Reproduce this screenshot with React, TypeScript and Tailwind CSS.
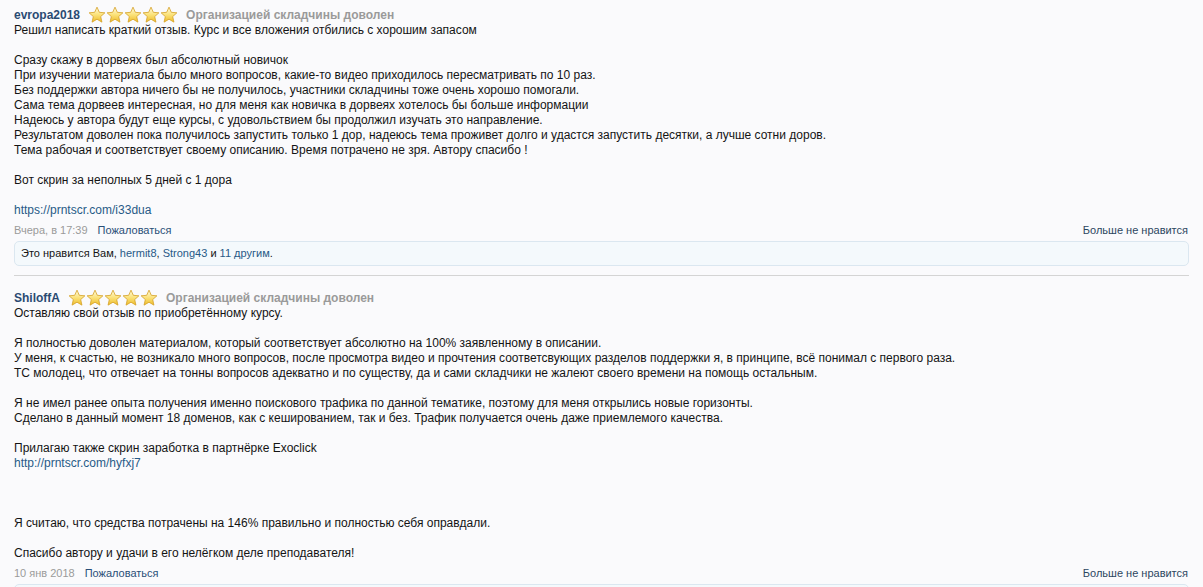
import React from "react";

const Star = ({ id }: { id: string }) => (
  <svg width="18" height="18" viewBox="0 0 24 24" className="block">
    <defs>
      <linearGradient id={id} x1="0" y1="0" x2="0" y2="1">
        <stop offset="0" stopColor="#fffbe0" />
        <stop offset="0.5" stopColor="#fbe27a" />
        <stop offset="1" stopColor="#eebc2a" />
      </linearGradient>
    </defs>
    <path
      d="M12 1.5l3.1 6.9 7.4.7-5.6 5 1.7 7.4L12 17.6l-6.6 3.9 1.7-7.4-5.6-5 7.4-.7z"
      fill={`url(#${id})`}
      stroke="#d6a32a"
      strokeWidth="1.1"
      strokeLinejoin="round"
    />
  </svg>
);

const Stars = ({ k }: { k: string }) => (
  <div className="flex">
    {[0, 1, 2, 3, 4].map((i) => (
      <Star key={i} id={`g${k}${i}`} />
    ))}
  </div>
);

type Line = string | { link: string } | null;

const Review = ({
  user,
  k,
  lines,
  date,
  likes,
}: {
  user: string;
  k: string;
  lines: Line[];
  date: string;
  likes: boolean;
}) => (
  <div className="px-[14px]">
    <div className="flex items-center h-[17px] text-[12px] font-bold">
      <span className="text-[#2a4a72]">{user}</span>
      <span className="ml-[8px]">
        <Stars k={k} />
      </span>
      <span className="ml-[8px] text-[#9a9a9a]">Организацией складчины доволен</span>
    </div>
    <div className="text-[12px] leading-[15px] text-[#141414]">
      {lines.map((l, i) =>
        l === null ? (
          <div key={i} className="h-[15px]" />
        ) : typeof l === "string" ? (
          <div key={i}>{l}</div>
        ) : (
          <div key={i} className="text-[#285a87]">
            {l.link}
          </div>
        )
      )}
    </div>
    <div className="mt-[5px] flex justify-between text-[11px] leading-[15px]">
      <div>
        <span className="text-[#9a9a9a]">{date}</span>
        <span className="ml-[10px] text-[#2a4f78]">Пожаловаться</span>
      </div>
      <span className="text-[#2c4660] mr-[1px]">Больше не нравится</span>
    </div>
    <div className="mt-[3px] h-[25px] rounded-[5px] border border-[#dbe7f0] bg-[#f4f9fc] flex items-center px-[6px] text-[11px] text-[#141414]">
      {likes && (
        <span>
          Это нравится Вам, <span className="text-[#285a87]">hermit8</span>,{" "}
          <span className="text-[#285a87]">Strong43</span> и{" "}
          <span className="text-[#285a87]">11 другим</span>.
        </span>
      )}
    </div>
  </div>
);

export default function App() {
  return (
    <div
      className="w-[1203px] h-[587px] overflow-hidden bg-[#fafafc] pt-[6px]"
      style={{ fontFamily: '"Liberation Sans", Arial, sans-serif' }}
    >
      <Review
        user="evropa2018"
        k="a"
        date="Вчера, в 17:39"
        likes
        lines={[
          "Решил написать краткий отзыв. Курс и все вложения отбились с хорошим запасом",
          null,
          "Сразу скажу в дорвеях был абсолютный новичок",
          "При изучении материала было много вопросов, какие-то видео приходилось пересматривать по 10 раз.",
          "Без поддержки автора ничего бы не получилось, участники складчины тоже очень хорошо помогали.",
          "Сама тема дорвеев интересная, но для меня как новичка в дорвеях хотелось бы больше информации",
          "Надеюсь у автора будут еще курсы, с удовольствием бы продолжил изучать это направление.",
          "Результатом доволен пока получилось запустить только 1 дор, надеюсь тема проживет долго и удастся запустить десятки, а лучше сотни доров.",
          "Тема рабочая и соответствует своему описанию. Время потрачено не зря. Автору спасибо !",
          null,
          "Вот скрин за неполных 5 дней с 1 дора",
          null,
          { link: "https://prntscr.com/i33dua" },
        ]}
      />
      <div className="mx-[14px] mt-[9px] h-px bg-[#d4d4d4]" />
      <div className="pt-[13px]">
        <Review
          user="ShiloffA"
          k="b"
          date="10 янв 2018"
          likes={false}
          lines={[
            "Оставляю свой отзыв по приобретённому курсу.",
            null,
            "Я полностью доволен материалом, который соответствует абсолютно на 100% заявленному в описании.",
            "У меня, к счастью, не возникало много вопросов, после просмотра видео и прочтения соответсвующих разделов поддержки я, в принципе, всё понимал с первого раза.",
            "ТС молодец, что отвечает на тонны вопросов адекватно и по существу, да и сами складчики не жалеют своего времени на помощь остальным.",
            null,
            "Я не имел ранее опыта получения именно поискового трафика по данной тематике, поэтому для меня открылись новые горизонты.",
            "Сделано в данный момент 18 доменов, как с кешированием, так и без. Трафик получается очень даже приемлемого качества.",
            null,
            "Прилагаю также скрин заработка в партнёрке Exoclick",
            { link: "http://prntscr.com/hyfxj7" },
            null,
            null,
            null,
            "Я считаю, что средства потрачены на 146% правильно и полностью себя оправдали.",
            null,
            "Спасибо автору и удачи в его нелёгком деле преподавателя!",
          ]}
        />
      </div>
    </div>
  );
}
